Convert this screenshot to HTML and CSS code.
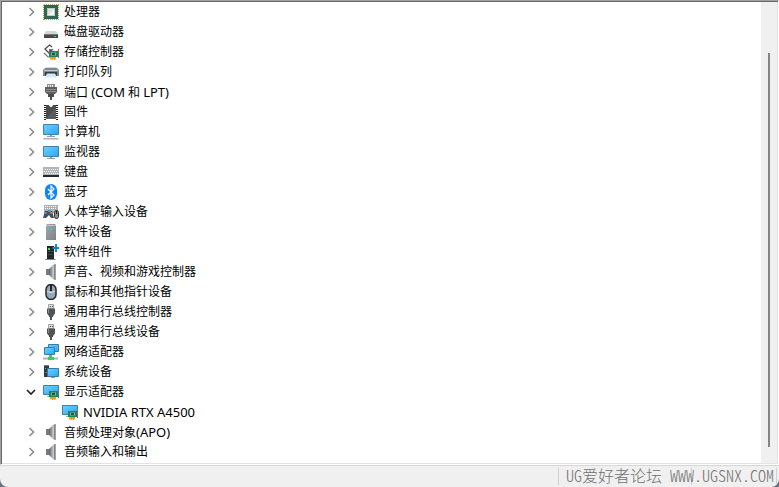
FILE: index.html
```html
<!DOCTYPE html>
<html lang="zh-CN">
<head>
<meta charset="utf-8">
<title>设备管理器</title>
<link rel="stylesheet" href="styles.css">
</head>
<body>
<svg class="defs" aria-hidden="true">
  <defs>
    <linearGradient id="screen" x1="0" y1="0" x2="1" y2="1"><stop offset="0" stop-color="#6fd0ff"/><stop offset="1" stop-color="#2ba6f5"/></linearGradient>
    <linearGradient id="metal" x1="0" y1="0" x2="1" y2="0"><stop offset="0" stop-color="#5c6065"/><stop offset="1" stop-color="#d4d7da"/></linearGradient>
    <linearGradient id="box" x1="0" y1="0" x2="1" y2="1"><stop offset="0" stop-color="#a3a8ab"/><stop offset="1" stop-color="#7b8185"/></linearGradient>
    <symbol id="right" viewBox="0 0 8 10"><path d="M1.500 1l4 4-4 4" fill="none" stroke="#8c8c8c" stroke-width="1.6"/></symbol>
    <symbol id="down" viewBox="0 0 10 8"><path d="M1 2l4 4 4-4" fill="none" stroke="#222" stroke-width="1.6"/></symbol>
    <symbol id="cpu" viewBox="0 0 16 16"><path d="M1 .5h15M1 15.500h15M.5 1v15M15.500 1v15" stroke="#b99a4b" stroke-dasharray="1 1" fill="none"/><path d="M1 1h14v14H1z" fill="#2f6650"/><path d="M4 4h8v8H4z" fill="#c3cbc6"/><path d="M5 11l6-6v6z" fill="#f4f6f4"/><path d="M5 5h6l-6 6z" fill="#dde2df"/></symbol>
    <symbol id="disk" viewBox="0 0 16 16"><path d="M3 7h10l2 3H1z" fill="#d3d5d7"/><path d="M1 10h14v4H1z" fill="#45494d"/><path d="M1 10.500h14" stroke="#777c80"/><path d="M11 12h2v1h-2z" fill="#2ee02e"/></symbol>
    <symbol id="board" viewBox="0 0 16 16"><path d="M6 7h9v6H6z" fill="#23825a"/><path d="M15.500 5v9" stroke="#68737a"/><path d="M8 8.500h5v3H8z" fill="#7bb9a0"/><path d="M9 9h3v2H9z" fill="#20553e"/><path d="M7 13h6v2.500H7z" fill="#f0a42c"/><path d="M9.500 13v3M11.500 13v3" stroke="#d77e16" stroke-width=".5"/></symbol>
    <symbol id="storage" viewBox="0 0 16 16"><path d="M9 3L6.500 1 2 5l4 4 3-3H6" fill="none" stroke="#4a4d50" stroke-width="1.3"/><path d="M1 9l4 4h2" stroke="#777" stroke-width="1.200" fill="none"/><use href="#board"/></symbol>
    <symbol id="printer" viewBox="0 0 16 16"><path d="M3 3h10l2 3H1z" fill="#d2d6d9"/><path d="M0 6l2-2h12l2 2v6H0z" fill="#7e8890"/><path d="M1 6.500h14" stroke="#c0c7cc"/><path d="M2 8h12v4H2z" fill="#353b42"/><path d="M4 9.500h8l2 4H2z" fill="#cfe9fb"/><path d="M13 5h2v1h-2z" fill="#1ed83d"/></symbol>
    <symbol id="port" viewBox="0 0 16 16"><path d="M4 0h8v4H4z" fill="#909294"/><path d="M5.500 1v2M7.500 1v2M9.500 1v2" stroke="#eee"/><path d="M2 3h12v5l-2 2H4L2 8z" fill="#5d5f61"/><path d="M3 5.500h10M3 7.500h10" stroke="#8b8d8f"/><path d="M5 10h6v3H9v3H7v-3H5z" fill="#494b4d"/></symbol>
    <symbol id="firmware" viewBox="0 0 16 16"><path d="M2 1v15M14 1v15" stroke="#222" stroke-width="2" stroke-dasharray="1 1"/><path d="M3 1h3l1 2h2l1-2h3v14H3z" fill="#494b4d"/><path d="M3 15L13 3v12z" fill="#5b5d60"/></symbol>
    <symbol id="monitor" viewBox="0 0 16 16"><path d="M.5 2.500h15v10H.5z" fill="url(#screen)" stroke="#3f81a9"/><path d="M7 13h2v1h3v1H4v-1h3z" fill="#8ba0ad"/></symbol>
    <symbol id="computer" viewBox="0 0 16 16"><path d="M.5.5h15v10H.5z" fill="url(#screen)" stroke="#3f81a9"/><path d="M7 11h2v1h3v1H4v-1h3z" fill="#8ba0ad"/><path d="M1 14h14l1 1.500H0z" fill="#aab3b9"/></symbol>
    <symbol id="keyboard" viewBox="0 0 16 16"><path d="M0 3h16v10H0z" fill="#b1b6bb"/><path d="M0 11h16v2H0z" fill="#25292d"/><path d="M2 5.500h13M2 9.500h13" stroke="#f4f6f7" stroke-dasharray="1 1"/><path d="M1 7.500h14" stroke="#f4f6f7" stroke-dasharray="1 1"/></symbol>
    <symbol id="bluetooth" viewBox="0 0 16 16"><rect x="2" width="12" height="16" rx="6" fill="#0a84ff"/><path d="M5 5l6 6-3 3V2l3 3-6 6" fill="none" stroke="#fff" stroke-width="1.2"/></symbol>
    <symbol id="hid" viewBox="0 0 16 16"><path d="M1 1h14v8H1z" fill="#aeb2b5"/><path d="M2 2.500h12M2 4.500h12" stroke="#fff" stroke-dasharray="1 1"/><path d="M0 14l2-7h7l2 7H8l-2-3-3 3z" fill="#474d54"/><path d="M2 8h2v2H2z" fill="#378fe5"/><path d="M5 6h3v2H5z" fill="#2aa5e4"/><path d="M7 8h2v2H7z" fill="#e9643c"/><rect x="11.500" y="6.500" width="4" height="8" rx="2" fill="#8a9095" stroke="#2c2f32"/><path d="M13.500 7v3" stroke="#222"/></symbol>
    <symbol id="device" viewBox="0 0 16 16"><path d="M4 0h8l1 1v15H3V1z" fill="url(#box)"/><path d="M3 1.500h10" stroke="#c2c6c8"/><path d="M7 4h2v2H7z" fill="#24d7ef"/></symbol>
    <symbol id="component" viewBox="0 0 16 16"><path d="M4 2h7v13H4z" fill="#24272a"/><path d="M2.500 15.500h10" stroke="#7d8387"/><path d="M5 7.500h5M5 10.500h5" stroke="#43474b"/><path d="M5 4h2v2H5z" fill="#2dea4d"/><path d="M13 0v8M9.500 4H16" stroke="#1685d4" stroke-width="2"/></symbol>
    <symbol id="speaker" viewBox="0 0 16 16"><path d="M3 5h3v6H3z" fill="#777b7f"/><path d="M6 5l5-5v16l-5-5z" fill="url(#metal)"/><path d="M11 0h2v16h-2z" fill="#a3a7aa"/><path d="M11.500 1v14" stroke="#7c8084"/></symbol>
    <symbol id="mouse" viewBox="0 0 16 16"><rect x="3" y=".5" width="10" height="15" rx="5" fill="#98a7b5" stroke="#22282f" stroke-width="1.5"/><path d="M4 7.500q4 2 8 0" fill="none" stroke="#dce3e8"/><path d="M8 1v6" stroke="#20262b" stroke-width="2"/></symbol>
    <symbol id="usb" viewBox="0 0 16 16"><path d="M5.500.5h5v4h-5z" fill="#ddd" stroke="#a4a4a4"/><path d="M7 2h1v1H7zM9 2h1v1H9z" fill="#555"/><path d="M4 4.500h8v5L10 12v1H9v3H7v-3H6v-1L4 9.500z" fill="#505356"/><path d="M5.500 5v4" stroke="#8a8d90"/></symbol>
    <symbol id="network" viewBox="0 0 16 16"><path d="M5.500.5h10v7h-10z" fill="url(#screen)" stroke="#317da8"/><path d="M1.500 3.500h10v7h-10z" fill="url(#screen)" stroke="#317da8"/><path d="M6 11h3v2h2v3H5v-3h1z" fill="#42c758"/><path d="M0 14.500h5M11 14.500h4" stroke="#aab3b6" stroke-width="2"/></symbol>
    <symbol id="system" viewBox="0 0 16 16"><path d="M1 1h5v12H1z" fill="#34393e"/><path d="M1 1.500h5M2 8.500h3" stroke="#71787e"/><path d="M2 4h1v1H2z" fill="#29df4c"/><path d="M4.500 4.500h11v8h-11z" fill="url(#screen)" stroke="#3679a4"/><path d="M8 13h4v1H8z" fill="#8ca0ac"/></symbol>
    <symbol id="display" viewBox="0 0 16 16"><path d="M.5 1.500h15v9H.5z" fill="url(#screen)" stroke="#3f81a9"/><path d="M4 12.500h4" stroke="#9ab0be"/><use href="#board"/></symbol>
  </defs>
</svg>
<main class="window">
  <section class="panel">
    <ul class="tree">
      <li class="row"><button class="toggle" aria-label="展开"><svg class="chevron"><use href="#right"/></svg></button><svg class="icon"><use href="#cpu"/></svg><span>处理器</span></li>
      <li class="row"><button class="toggle" aria-label="展开"><svg class="chevron"><use href="#right"/></svg></button><svg class="icon"><use href="#disk"/></svg><span>磁盘驱动器</span></li>
      <li class="row"><button class="toggle" aria-label="展开"><svg class="chevron"><use href="#right"/></svg></button><svg class="icon"><use href="#storage"/></svg><span>存储控制器</span></li>
      <li class="row"><button class="toggle" aria-label="展开"><svg class="chevron"><use href="#right"/></svg></button><svg class="icon"><use href="#printer"/></svg><span>打印队列</span></li>
      <li class="row"><button class="toggle" aria-label="展开"><svg class="chevron"><use href="#right"/></svg></button><svg class="icon"><use href="#port"/></svg><span>端口 <span class="latin">(COM</span> 和 <span class="latin">LPT)</span></span></li>
      <li class="row"><button class="toggle" aria-label="展开"><svg class="chevron"><use href="#right"/></svg></button><svg class="icon"><use href="#firmware"/></svg><span>固件</span></li>
      <li class="row"><button class="toggle" aria-label="展开"><svg class="chevron"><use href="#right"/></svg></button><svg class="icon"><use href="#computer"/></svg><span>计算机</span></li>
      <li class="row"><button class="toggle" aria-label="展开"><svg class="chevron"><use href="#right"/></svg></button><svg class="icon"><use href="#monitor"/></svg><span>监视器</span></li>
      <li class="row"><button class="toggle" aria-label="展开"><svg class="chevron"><use href="#right"/></svg></button><svg class="icon"><use href="#keyboard"/></svg><span>键盘</span></li>
      <li class="row"><button class="toggle" aria-label="展开"><svg class="chevron"><use href="#right"/></svg></button><svg class="icon"><use href="#bluetooth"/></svg><span>蓝牙</span></li>
      <li class="row"><button class="toggle" aria-label="展开"><svg class="chevron"><use href="#right"/></svg></button><svg class="icon"><use href="#hid"/></svg><span>人体学输入设备</span></li>
      <li class="row"><button class="toggle" aria-label="展开"><svg class="chevron"><use href="#right"/></svg></button><svg class="icon"><use href="#device"/></svg><span>软件设备</span></li>
      <li class="row"><button class="toggle" aria-label="展开"><svg class="chevron"><use href="#right"/></svg></button><svg class="icon"><use href="#component"/></svg><span>软件组件</span></li>
      <li class="row"><button class="toggle" aria-label="展开"><svg class="chevron"><use href="#right"/></svg></button><svg class="icon"><use href="#speaker"/></svg><span>声音、视频和游戏控制器</span></li>
      <li class="row"><button class="toggle" aria-label="展开"><svg class="chevron"><use href="#right"/></svg></button><svg class="icon"><use href="#mouse"/></svg><span>鼠标和其他指针设备</span></li>
      <li class="row"><button class="toggle" aria-label="展开"><svg class="chevron"><use href="#right"/></svg></button><svg class="icon"><use href="#usb"/></svg><span>通用串行总线控制器</span></li>
      <li class="row"><button class="toggle" aria-label="展开"><svg class="chevron"><use href="#right"/></svg></button><svg class="icon"><use href="#usb"/></svg><span>通用串行总线设备</span></li>
      <li class="row"><button class="toggle" aria-label="展开"><svg class="chevron"><use href="#right"/></svg></button><svg class="icon"><use href="#network"/></svg><span>网络适配器</span></li>
      <li class="row"><button class="toggle" aria-label="展开"><svg class="chevron"><use href="#right"/></svg></button><svg class="icon"><use href="#system"/></svg><span>系统设备</span></li>
      <li>
        <div class="row"><button class="toggle" aria-label="折叠"><svg class="chevron open"><use href="#down"/></svg></button><svg class="icon"><use href="#display"/></svg><span>显示适配器</span></div>
        <ul class="children">
          <li class="row"><svg class="icon"><use href="#display"/></svg><span class="latin">NVIDIA RTX A4500</span></li>
        </ul>
      </li>
      <li class="row"><button class="toggle" aria-label="展开"><svg class="chevron"><use href="#right"/></svg></button><svg class="icon"><use href="#speaker"/></svg><span>音频处理对象<span class="latin">(APO)</span></span></li>
      <li class="row"><button class="toggle" aria-label="展开"><svg class="chevron"><use href="#right"/></svg></button><svg class="icon"><use href="#speaker"/></svg><span>音频输入和输出</span></li>
    </ul>
    <div class="scrollbar"><div class="thumb"></div></div>
  </section>
  <footer class="status">
    <div class="pane main"></div>
    <div class="pane second"></div>
    <div class="pane third"></div>
    <p class="watermark">UG爱好者论坛 WWW.UGSNX.COM</p>
  </footer>
</main>
</body>
</html>
```
FILE: styles.css
```css
* { box-sizing: border-box; }
body {
  margin: 0;
  background: #66727f;
  color: #000;
  font: 12px/20px "Noto Sans", "Noto Sans CJK SC", sans-serif;
}
ul, p { margin: 0; padding: 0; list-style: none; }
.defs { position: absolute; width: 0; height: 0; }
.window {
  display: flex;
  flex-direction: column;
  height: 100vh;
  overflow: hidden;
  background: #f0f0f0;
  border-radius: 0 0 8px 8px;
}
.panel {
  display: flex;
  flex: 1;
  min-height: 0;
  background: #fff;
  border: 1px solid #a0a0a0;
  border-right-color: #fff;
  border-bottom-color: #fff;
  box-shadow: inset 1px 1px #696969, inset -1px -1px #e3e3e3;
  padding: 1px;
}
.tree { flex: 1; padding-left: 26px; }
.row { display: flex; align-items: center; height: 20px; white-space: nowrap; }
.latin { font-size: 13px; }
.toggle {
  display: flex;
  align-items: center;
  width: 15px;
  height: 20px;
  padding: 0;
  border: 0;
  background: none;
}
.chevron { width: 8px; height: 10px; }
.chevron.open { width: 10px; height: 8px; margin-left: -2px; }
.icon { flex: none; width: 16px; height: 16px; margin-right: 5px; }
.children { padding-left: 34px; }
.scrollbar { width: 16px; padding: 51px 7px 16px; background: #f0f0f0; }
.thumb { width: 2px; height: 100%; background: #858585; }
.status {
  position: relative;
  display: flex;
  height: 22px;
  padding: 2px 2px 2px 0;
  border-top: 1px solid #d7d7d7;
}
.pane { border-right: 1px solid #d0d0d0; }
.main { flex: 1; }
.second { width: 133px; }
.third { width: 85px; }
.watermark {
  position: absolute;
  right: 5px;
  top: 0;
  color: #707070;
  font: 300 16px/18px "Noto Sans CJK SC", sans-serif;
  font-feature-settings: "hwid";
  white-space: nowrap;
}
```
